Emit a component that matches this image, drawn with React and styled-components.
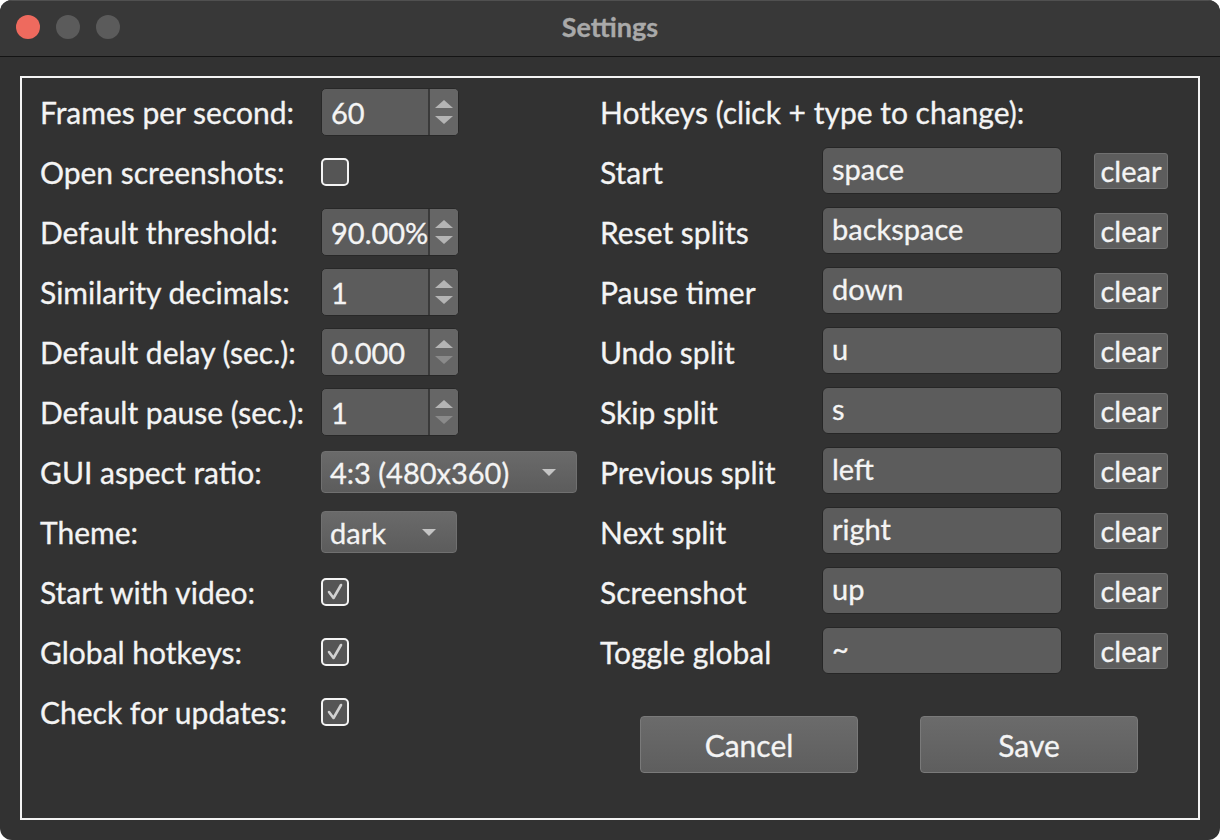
import React from "react";
import styled, { createGlobalStyle } from "styled-components";

const GlobalStyle = createGlobalStyle`
    html, body {
        margin: 0;
        padding: 0;
        background: #ffffff;
    }
    body {
        font-family: Lato, "Open Sans", sans-serif;
        -webkit-text-stroke: 0.3px currentColor;
    }
`;

const Window = styled.div`
    width: 1220px;
    height: 840px;
    display: flex;
    flex-direction: column;
    background-color: #323232;
    border-radius: 12px;
    overflow: hidden;
    color: #f4f4f4;
`;

const TitleBar = styled.div`
    display: flex;
    align-items: center;
    position: relative;
    background-color: #383838;
    border-top: 1px solid #505050;
    border-bottom: 1px solid #141414;
    box-sizing: border-box;
    height: 57px;
    padding: 0 0 3px 16px;
    gap: 16px;
`;

const Light = styled.span`
    width: 24px;
    height: 24px;
    border-radius: 50%;
    background-color: ${(p) => p.$color};
`;

const Title = styled.div`
    position: absolute;
    left: 0;
    right: 0;
    top: 9px;
    text-align: center;
    font-size: 27px;
    font-weight: 700;
    color: #a9a9a9;
    pointer-events: none;
`;

const Body = styled.div`
    flex: 1;
    padding: 19px 20px 20px 20px;
    display: flex;
`;

const Frame = styled.div`
    flex: 1;
    border: 2px solid #f4f4f4;
    display: flex;
    padding: 4px 0 0 18px;
`;

const LeftGrid = styled.div`
    display: grid;
    grid-template-columns: 281px 258px;
    grid-auto-rows: 60px;
    align-items: center;
    width: 560px;
`;

const RightCol = styled.div`
    display: flex;
    flex-direction: column;
`;

const RightGrid = styled.div`
    display: grid;
    grid-template-columns: 222px 240px 106px;
    grid-auto-rows: 60px;
    align-items: center;
`;

const Label = styled.span`
    font-size: 30px;
    white-space: nowrap;
    line-height: 1;
`;

const Header = styled(Label)`
    grid-column: 1 / -1;
`;

const Spin = styled.div`
    width: 138px;
    height: 48px;
    box-sizing: border-box;
    display: flex;
    border: 1px solid #282828;
    border-radius: 5px;
    background-color: #5c5c5c;
    overflow: hidden;
`;

const SpinValue = styled.div`
    flex: 1;
    display: flex;
    align-items: center;
    padding-left: 9px;
    font-size: 29px;
    border-right: 2px solid #3a3a3a;
`;

const SpinButtons = styled.div`
    width: 28px;
    display: flex;
    flex-direction: column;
    align-items: center;
    justify-content: center;
    gap: 8px;
    background-color: #666666;
`;

const Arrow = styled.span`
    width: 0;
    height: 0;
    border-left: 9px solid transparent;
    border-right: 9px solid transparent;
    ${(p) => (p.$down ? "border-top" : "border-bottom")}: 8px solid ${(p) =>
        p.$off ? "#8a8a8a" : "#b4b4b4"};
`;

const Check = styled.span`
    width: 28px;
    height: 28px;
    box-sizing: border-box;
    border: 2px solid #f4f4f4;
    border-radius: 5px;
    background-color: #555555;
    display: flex;
    align-items: center;
    justify-content: center;
`;

const Combo = styled.div`
    width: ${(p) => p.$width}px;
    height: 42px;
    box-sizing: border-box;
    display: flex;
    align-items: center;
    justify-content: space-between;
    padding: 0 20px 0 8px;
    border: 1px solid #707070;
    border-radius: 4px;
    background: linear-gradient(#6a6a6a, #5c5c5c);
    font-size: 29px;
`;

const ComboArrow = styled.span`
    width: 0;
    height: 0;
    border-left: 7px solid transparent;
    border-right: 7px solid transparent;
    border-top: 7px solid #c4c4c4;
`;

const KeyInput = styled.div`
    height: 47px;
    margin-bottom: 4px;
    box-sizing: border-box;
    display: flex;
    align-items: center;
    padding: 0 9px 4px;
    border: 1px solid #262626;
    border-radius: 6px;
    background-color: #5c5c5c;
    font-size: 29px;
`;

const ClearButton = styled.div`
    justify-self: end;
    width: 74px;
    height: 36px;
    margin-bottom: 2px;
    box-sizing: border-box;
    display: flex;
    align-items: center;
    justify-content: center;
    border: 1px solid #707070;
    border-radius: 3px;
    background-color: #5d5d5d;
    font-size: 29px;
    padding-bottom: 2px;
`;

const ButtonRow = styled.div`
    display: flex;
    gap: 62px;
    padding: 34px 0 0 40px;
`;

const Button = styled.div`
    width: 218px;
    height: 57px;
    box-sizing: border-box;
    display: flex;
    align-items: center;
    justify-content: center;
    border: 1px solid #7a7a7a;
    border-radius: 4px;
    background: linear-gradient(#6b6b6b, #5e5e5e);
    font-size: 30px;
`;

const SpinBox = ({ value, downOff }) => (
    <Spin>
        <SpinValue>{value}</SpinValue>
        <SpinButtons>
            <Arrow />
            <Arrow $down $off={downOff} />
        </SpinButtons>
    </Spin>
);

const CheckBox = ({ checked }) => (
    <Check>
        {checked && (
            <svg width="20" height="20" viewBox="0 0 20 20">
                <path d="M4 10 L8.5 16 L16 3" fill="none" stroke="#d0d0d0" strokeWidth="2.6" strokeLinecap="round" strokeLinejoin="round" />
            </svg>
        )}
    </Check>
);

const hotkeys = [
    ["Start", "space"],
    ["Reset splits", "backspace"],
    ["Pause timer", "down"],
    ["Undo split", "u"],
    ["Skip split", "s"],
    ["Previous split", "left"],
    ["Next split", "right"],
    ["Screenshot", "up"],
    ["Toggle global", "~"],
];

const App = () => {
    return (
        <Window>
            <GlobalStyle />
            <TitleBar>
                <Light $color="#ee6a5e" />
                <Light $color="#5b5b5b" />
                <Light $color="#5b5b5b" />
                <Title>Settings</Title>
            </TitleBar>
            <Body>
                <Frame>
                    <LeftGrid>
                        <Label>Frames per second:</Label>
                        <SpinBox value="60" />
                        <Label>Open screenshots:</Label>
                        <CheckBox />
                        <Label>Default threshold:</Label>
                        <SpinBox value="90.00%" />
                        <Label>Similarity decimals:</Label>
                        <SpinBox value="1" />
                        <Label>Default delay (sec.):</Label>
                        <SpinBox value="0.000" downOff />
                        <Label>Default pause (sec.):</Label>
                        <SpinBox value="1" downOff />
                        <Label>GUI aspect ratio:</Label>
                        <Combo $width={256}>
                            4:3 (480x360)
                            <ComboArrow />
                        </Combo>
                        <Label>Theme:</Label>
                        <Combo $width={136}>
                            dark
                            <ComboArrow />
                        </Combo>
                        <Label>Start with video:</Label>
                        <CheckBox checked />
                        <Label>Global hotkeys:</Label>
                        <CheckBox checked />
                        <Label>Check for updates:</Label>
                        <CheckBox checked />
                    </LeftGrid>
                    <RightCol>
                        <RightGrid>
                            <Header>Hotkeys (click + type to change):</Header>
                            {hotkeys.map(([name, key]) => (
                                <React.Fragment key={name}>
                                    <Label>{name}</Label>
                                    <KeyInput>{key}</KeyInput>
                                    <ClearButton>clear</ClearButton>
                                </React.Fragment>
                            ))}
                        </RightGrid>
                        <ButtonRow>
                            <Button>Cancel</Button>
                            <Button>Save</Button>
                        </ButtonRow>
                    </RightCol>
                </Frame>
            </Body>
        </Window>
    );
};

export default App;
